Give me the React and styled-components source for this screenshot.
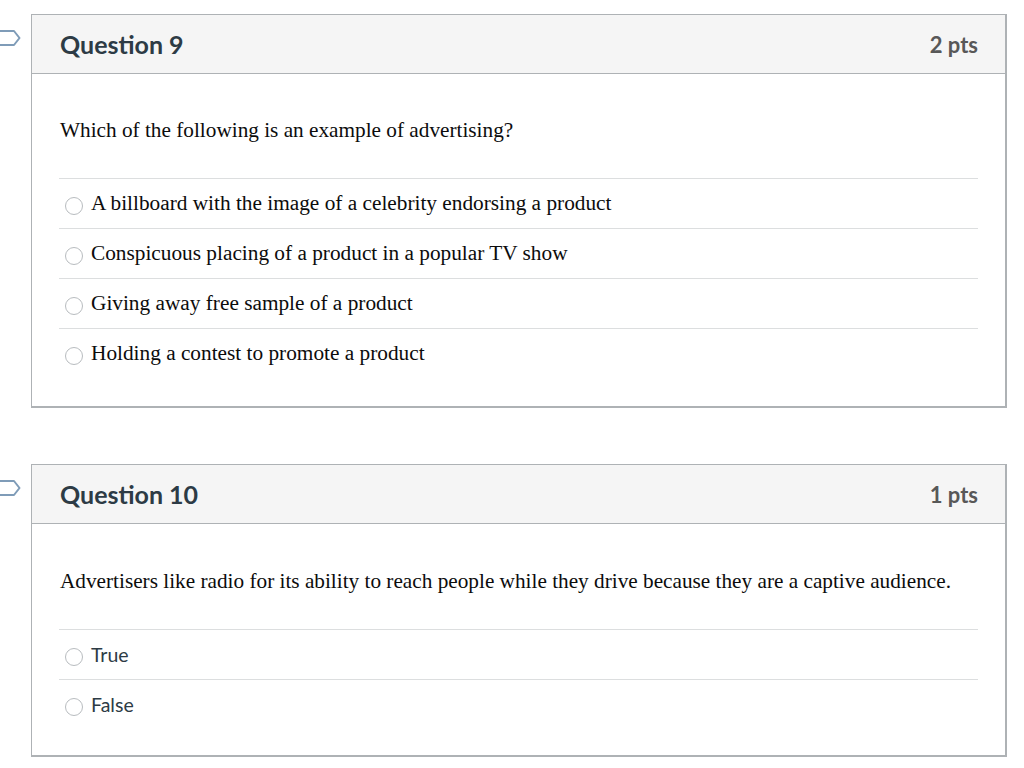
import React from "react";
import styled, { createGlobalStyle } from "styled-components";

const GlobalStyle = createGlobalStyle`
  html, body {
    margin: 0;
    padding: 0;
    background: #ffffff;
  }
  body {
    font-family: "Lato", "Liberation Sans", sans-serif;
  }
`;

const questions = [
  {
    id: 9,
    points: 2,
    text: "Which of the following is an example of advertising?",
    serifAnswers: true,
    answers: [
      "A billboard with the image of a celebrity endorsing a product",
      "Conspicuous placing of a product in a popular TV show",
      "Giving away free sample of a product",
      "Holding a contest to promote a product",
    ],
  },
  {
    id: 10,
    points: 1,
    text: "Advertisers like radio for its ability to reach people while they drive because they are a captive audience.",
    serifAnswers: false,
    answers: ["True", "False"],
  },
];

const Page = styled.div`
  padding: 14px 0 0 31px;
  display: flex;
  flex-direction: column;
  gap: 56px;
  width: 976px;
`;

const Card = styled.section`
  position: relative;
  border: 1px solid #aeb2b5;
  border-right-width: 2px;
  border-bottom-width: 2px;
  background: #fff;
`;

const Flag = styled.svg`
  position: absolute;
  left: -36px;
  top: 14px;
  width: 26px;
  height: 18px;
`;

const Header = styled.header`
  display: flex;
  align-items: center;
  justify-content: space-between;
  height: 58px;
  padding: 0 27px 0 28px;
  background: #f5f5f5;
  border-bottom: 1px solid #aeb2b5;
`;

const Title = styled.h2`
  margin: 0;
  font-family: "Lato", sans-serif;
  font-weight: 700;
  font-size: 25px;
  color: #2d3b45;
`;

const Points = styled.span`
  font-family: "Lato", sans-serif;
  font-weight: 700;
  font-size: 22px;
  color: #585858;
`;

const Body = styled.div`
  padding: ${(p) => (p.$tight ? "45px 27px 26px" : "44px 27px 28px")};
`;

const QuestionText = styled.p`
  margin: 0 0 36px 1px;
  font-family: "Liberation Serif", "Times New Roman", serif;
  font-size: 21.25px;
  line-height: 24px;
  color: #0c0c0c;
`;

const AnswerList = styled.div`
  display: flex;
  flex-direction: column;
`;

const Answer = styled.label`
  display: flex;
  align-items: center;
  gap: 8px;
  height: 50px;
  padding-left: 6px;
  border-top: 1px solid #dcdedf;
  box-sizing: border-box;
`;

const Radio = styled.span`
  width: 18px;
  height: 18px;
  border-radius: 50%;
  border: 1px solid #b8bcbf;
  box-sizing: border-box;
  flex-shrink: 0;
  margin-top: 4px;
  background: #fff;
`;

const AnswerText = styled.span`
  font-family: ${(p) =>
    p.$serif
      ? `"Liberation Serif", "Times New Roman", serif`
      : `"Lato", sans-serif`};
  font-size: ${(p) => (p.$serif ? "21.3px" : "19.5px")};
  color: ${(p) => (p.$serif ? "#0c0c0c" : "#2d3b45")};
`;

const FlagIcon = () => (
  <Flag viewBox="0 0 26 18">
    <path
      d="M1 2 H18 L23.5 9 L18 16 H1 Z"
      fill="none"
      stroke="#7f9cb8"
      strokeWidth="2"
      strokeLinejoin="round"
    />
  </Flag>
);

export default function App() {
  return (
    <>
      <GlobalStyle />
      <Page>
        {questions.map((q) => (
          <Card key={q.id}>
            <FlagIcon />
            <Header>
              <Title>Question {q.id}</Title>
              <Points>{q.points} pts</Points>
            </Header>
            <Body $tight={!q.serifAnswers}>
              <QuestionText>{q.text}</QuestionText>
              <AnswerList>
                {q.answers.map((a) => (
                  <Answer key={a}>
                    <Radio />
                    <AnswerText $serif={q.serifAnswers}>{a}</AnswerText>
                  </Answer>
                ))}
              </AnswerList>
            </Body>
          </Card>
        ))}
      </Page>
    </>
  );
}
